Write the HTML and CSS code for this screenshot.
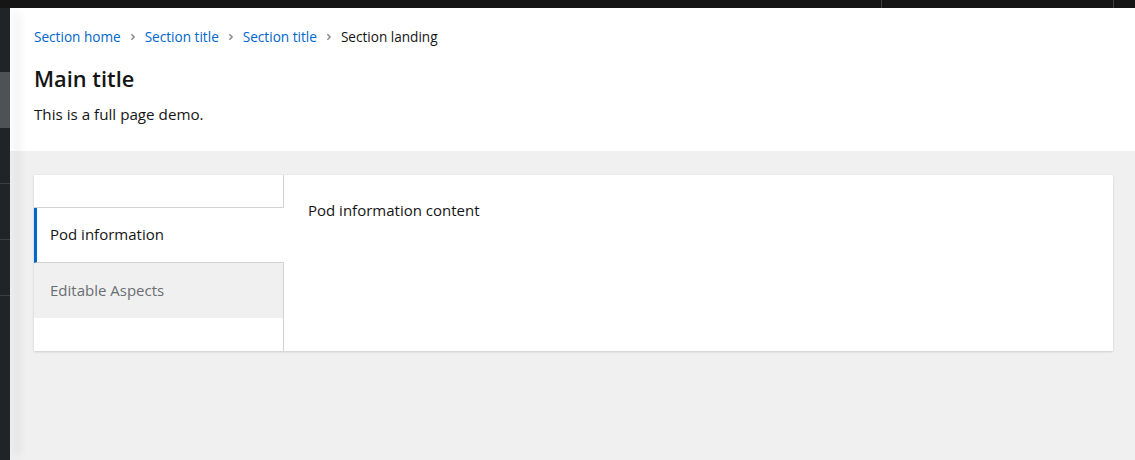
FILE: index.html
```html
<!DOCTYPE html>
<html lang="en">
<head>
<meta charset="utf-8">
<title>Full page demo</title>
<link rel="stylesheet" href="styles.css">
</head>
<body>
<div class="page">
  <header class="masthead">
    <div class="mh-main"></div>
    <div class="mh-tools"></div>
    <div class="mh-end"></div>
  </header>
  <div class="body-row">
    <nav class="sidebar">
      <div class="nav-item current"></div>
      <div class="nav-item"></div>
      <div class="nav-item"></div>
      <div class="nav-item"></div>
    </nav>
    <main class="main">
      <section class="section-light">
        <nav class="breadcrumb">
          <a class="crumb" href="#">Section home</a>
          <span class="sep"><svg viewBox="0 0 256 512" width="6" height="10"><path fill="currentColor" d="M224.3 273l-136 136c-9.4 9.4-24.6 9.4-33.9 0l-22.6-22.6c-9.4-9.4-9.4-24.6 0-33.9l96.4-96.4-96.4-96.4c-9.4-9.4-9.4-24.6 0-33.9L54.3 103c9.4-9.4 24.6-9.4 33.9 0l136 136c9.5 9.4 9.5 24.6.1 34z"/></svg></span>
          <a class="crumb" href="#">Section title</a>
          <span class="sep"><svg viewBox="0 0 256 512" width="6" height="10"><path fill="currentColor" d="M224.3 273l-136 136c-9.4 9.4-24.6 9.4-33.9 0l-22.6-22.6c-9.4-9.4-9.4-24.6 0-33.9l96.4-96.4-96.4-96.4c-9.4-9.4-9.4-24.6 0-33.9L54.3 103c9.4-9.4 24.6-9.4 33.9 0l136 136c9.5 9.4 9.5 24.6.1 34z"/></svg></span>
          <a class="crumb" href="#">Section title</a>
          <span class="sep"><svg viewBox="0 0 256 512" width="6" height="10"><path fill="currentColor" d="M224.3 273l-136 136c-9.4 9.4-24.6 9.4-33.9 0l-22.6-22.6c-9.4-9.4-9.4-24.6 0-33.9l96.4-96.4-96.4-96.4c-9.4-9.4-9.4-24.6 0-33.9L54.3 103c9.4-9.4 24.6-9.4 33.9 0l136 136c9.5 9.4 9.5 24.6.1 34z"/></svg></span>
          <span class="crumb current">Section landing</span>
        </nav>
        <div class="heading">
          <h1 class="title">Main title</h1>
          <p class="lead">This is a full page demo.</p>
        </div>
      </section>
      <section class="section-grey">
        <div class="card">
          <div class="tabs">
            <div class="tab-spacer"></div>
            <div class="tab active">Pod information</div>
            <div class="tab">Editable Aspects</div>
            <div class="tab-fill"></div>
          </div>
          <div class="tab-panel">Pod information content</div>
        </div>
      </section>
    </main>
  </div>
</div>
</body>
</html>
```

FILE: styles.css
```css
* { box-sizing: border-box; }
html, body { margin: 0; padding: 0; }
body {
  width: 1135px;
  height: 460px;
  overflow: hidden;
  font-family: "Open Sans", "Liberation Sans", sans-serif;
  color: #151515;
  background: #f0f0f0;
}
.page {
  display: flex;
  flex-direction: column;
  height: 460px;
}
.masthead {
  height: 8px;
  background: #151515;
  display: flex;
  flex-shrink: 0;
}
.mh-main { width: 881px; }
.mh-tools { width: 232px; border-left: 1px solid #3c3f42; }
.mh-end { flex: 1; border-left: 1px solid #3c3f42; }
.body-row {
  flex: 1;
  display: flex;
  min-height: 0;
}
.sidebar {
  width: 10px;
  flex-shrink: 0;
  background: #212427;
  padding-top: 64px;
  position: relative;
  z-index: 2;
  box-shadow: 12px 0 10px -4px rgba(3, 3, 3, 0.2);
}
.nav-item {
  height: 56px;
  border-bottom: 1px solid #3c3f42;
}
.nav-item.current {
  background: #4f5255;
  border-bottom: none;
}
.main {
  flex: 1;
  display: flex;
  flex-direction: column;
  background: #f0f0f0;
}
.section-light {
  background: #fff;
  padding: 18px 24px 25px;
}
.breadcrumb {
  display: flex;
  align-items: center;
  font-size: 13.6px;
  line-height: 21px;
}
.crumb {
  color: #0066cc;
  text-decoration: none;
}
.crumb.current { color: #151515; }
.sep {
  color: #8a8d90;
  display: inline-flex;
  align-items: center;
  margin: 0 9px 0 9px;
}
.sep svg { display: block; }
.heading { padding-top: 16px; }
.title {
  margin: 0 0 7px;
  font-size: 21.8px;
  line-height: 32px;
  font-weight: 600;
}
.lead {
  margin: 0;
  font-size: 15.2px;
  line-height: 24px;
}
.section-grey {
  padding: 24px 22px 24px 24px;
  flex: 1;
}
.card {
  background: #fff;
  display: flex;
  height: 176px;
  box-shadow: 0 1px 2px 0 rgba(3, 3, 3, 0.12), 0 0 2px 0 rgba(3, 3, 3, 0.06);
}
.tabs {
  width: 250px;
  flex-shrink: 0;
  display: flex;
  flex-direction: column;
}
.tab-spacer {
  height: 33px;
  border-right: 1px solid #d2d2d2;
  border-bottom: 1px solid #d2d2d2;
}
.tab {
  height: 55px;
  display: flex;
  align-items: center;
  padding-left: 16px;
  padding-bottom: 2px;
  font-size: 15px;
  color: #6a6e73;
  background: #f0f0f0;
  border-right: 1px solid #d2d2d2;
}
.tab.active {
  background: #fff;
  color: #151515;
  border-right: none;
  border-left: 3px solid #0066cc;
  padding-left: 13px;
  border-bottom: 1px solid #d2d2d2;
}
.tab-fill {
  flex: 1;
  border-right: 1px solid #d2d2d2;
}
.tab-panel {
  flex: 1;
  padding: 23px 24px;
  font-size: 15px;
  line-height: 24px;
}
```
